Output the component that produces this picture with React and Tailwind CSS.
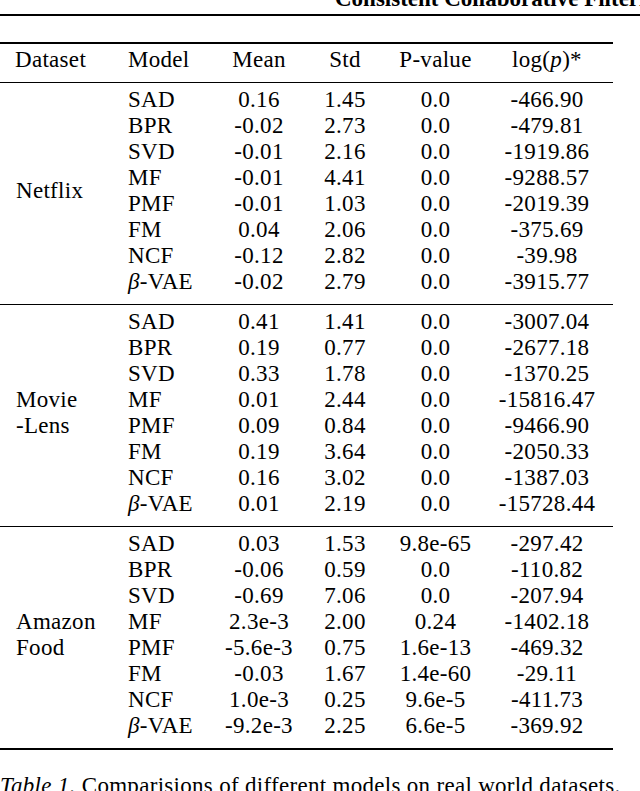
import React from "react";

const Beta = () => (
  <span>
    <i>β</i>-VAE
  </span>
);

const blocks = [
  {
    name: ["Netflix"],
    rows: [
      ["SAD", "0.16", "1.45", "0.0", "-466.90"],
      ["BPR", "-0.02", "2.73", "0.0", "-479.81"],
      ["SVD", "-0.01", "2.16", "0.0", "-1919.86"],
      ["MF", "-0.01", "4.41", "0.0", "-9288.57"],
      ["PMF", "-0.01", "1.03", "0.0", "-2019.39"],
      ["FM", "0.04", "2.06", "0.0", "-375.69"],
      ["NCF", "-0.12", "2.82", "0.0", "-39.98"],
      ["BETA", "-0.02", "2.79", "0.0", "-3915.77"],
    ],
  },
  {
    name: ["Movie", "-Lens"],
    rows: [
      ["SAD", "0.41", "1.41", "0.0", "-3007.04"],
      ["BPR", "0.19", "0.77", "0.0", "-2677.18"],
      ["SVD", "0.33", "1.78", "0.0", "-1370.25"],
      ["MF", "0.01", "2.44", "0.0", "-15816.47"],
      ["PMF", "0.09", "0.84", "0.0", "-9466.90"],
      ["FM", "0.19", "3.64", "0.0", "-2050.33"],
      ["NCF", "0.16", "3.02", "0.0", "-1387.03"],
      ["BETA", "0.01", "2.19", "0.0", "-15728.44"],
    ],
  },
  {
    name: ["Amazon", "Food"],
    rows: [
      ["SAD", "0.03", "1.53", "9.8e-65", "-297.42"],
      ["BPR", "-0.06", "0.59", "0.0", "-110.82"],
      ["SVD", "-0.69", "7.06", "0.0", "-207.94"],
      ["MF", "2.3e-3", "2.00", "0.24", "-1402.18"],
      ["PMF", "-5.6e-3", "0.75", "1.6e-13", "-469.32"],
      ["FM", "-0.03", "1.67", "1.4e-60", "-29.11"],
      ["NCF", "1.0e-3", "0.25", "9.6e-5", "-411.73"],
      ["BETA", "-9.2e-3", "2.25", "6.6e-5", "-369.92"],
    ],
  },
];

const rowGrid = "grid grid-cols-[90px_82px_90px_91px_132px]";

export default function App() {
  return (
    <div
      className="w-[640px] h-[791px] overflow-hidden bg-white text-black text-[23px] leading-[26px] tracking-[0.3px]"
      style={{ fontFamily: '"Liberation Serif", "Times New Roman", serif' }}
    >
      {/* running header, cut at top */}
      <div className="h-[14px] overflow-hidden whitespace-nowrap pl-[335px]">
        <div className="mt-[-12px] font-bold leading-[22px] text-[23px] tracking-normal">
          Consistent Collaborative Filtering
        </div>
      </div>
      <div className="h-[2px] bg-black" />

      <div className="w-[613px] mt-[26px]">
        <div className="h-[2px] bg-black" />
        {/* header */}
        <div className="flex pt-[3px] pb-[9px]">
          <div className="w-[128px] pl-[15px]">Dataset</div>
          <div className={rowGrid}>
            <div>Model</div>
            <div className="text-center">Mean</div>
            <div className="text-center">Std</div>
            <div className="text-center">P-value</div>
            <div className="text-center">
              log(<i>p</i>)*
            </div>
          </div>
        </div>
        <div className="h-px bg-black" />

        {blocks.map((b, bi) => (
          <div key={bi}>
            <div className="flex pt-[4px] pb-[9px]">
              <div className="w-[128px] pl-[16px] flex flex-col justify-center">
                {b.name.map((n) => (
                  <div key={n}>{n}</div>
                ))}
              </div>
              <div className="flex flex-col">
                {b.rows.map((r, ri) => (
                  <div key={ri} className={rowGrid}>
                    <div>{r[0] === "BETA" ? <Beta /> : r[0]}</div>
                    <div className="text-center">{r[1]}</div>
                    <div className="text-center">{r[2]}</div>
                    <div className="text-center">{r[3]}</div>
                    <div className="text-center">{r[4]}</div>
                  </div>
                ))}
              </div>
            </div>
            <div className={bi === 2 ? "h-[2px] bg-black" : "h-px bg-black"} />
          </div>
        ))}
      </div>

      <div className="mt-[23px] whitespace-nowrap">
        <i>Table 1.</i> Comparisions of different models on real world datasets.
      </div>
    </div>
  );
}
